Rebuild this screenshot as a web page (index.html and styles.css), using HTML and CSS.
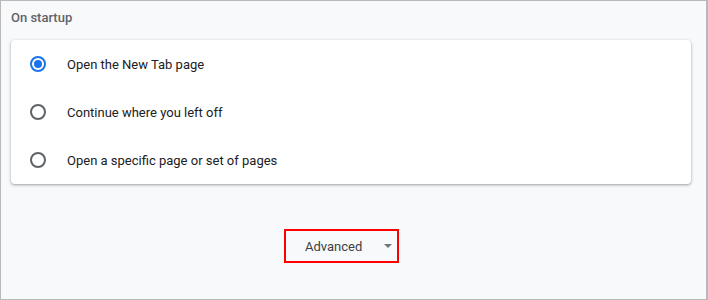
FILE: index.html
```html
<!DOCTYPE html>
<html lang="en">
<head>
  <meta charset="UTF-8" />
  <title>On startup</title>
  <link rel="stylesheet" href="styles.css">
</head>
<body>
  <div class="settings-page">
    <h2 class="section-title">On startup</h2>
    <div class="card">
      <label class="option">
        <span class="radio checked"></span>
        <span class="option-label">Open the New Tab page</span>
      </label>
      <label class="option">
        <span class="radio"></span>
        <span class="option-label">Continue where you left off</span>
      </label>
      <label class="option">
        <span class="radio"></span>
        <span class="option-label">Open a specific page or set of pages</span>
      </label>
    </div>
    <button class="advanced-btn">
      <span>Advanced</span>
      <span class="arrow"></span>
    </button>
  </div>
</body>
</html>
```

FILE: styles.css
```css
html, body {
  margin: 0;
  padding: 0;
}
body {
  font-family: Roboto, 'Liberation Sans', sans-serif;
  background: #f8f9fa;
}
.settings-page {
  width: 708px;
  height: 300px;
  box-sizing: border-box;
  border: 1px solid #b9b9b9;
  border-right-width: 2px;
  padding: 7px 15px 0 10px;
  background: #f8f9fa;
}
.section-title {
  margin: 0 0 12px 0;
  font-size: 13px;
  font-weight: 500;
  line-height: 20px;
  color: #5f6368;
}
.card {
  background: #fff;
  border-radius: 4px;
  box-shadow: 0 1px 2px rgba(60,64,67,0.3), 0 1px 3px 1px rgba(60,64,67,0.15);
}
.option {
  display: flex;
  align-items: center;
  height: 48px;
  padding-left: 19px;
  cursor: pointer;
}
.radio {
  width: 16px;
  height: 16px;
  box-sizing: border-box;
  border: 2px solid #5f6368;
  border-radius: 50%;
  display: flex;
  align-items: center;
  justify-content: center;
  margin-right: 21px;
}
.radio.checked {
  border-color: #1a73e8;
}
.radio.checked::after {
  content: "";
  width: 8px;
  height: 8px;
  border-radius: 50%;
  background: #1a73e8;
}
.option-label {
  font-size: 13px;
  color: #202124;
}
.advanced-btn {
  display: flex;
  align-items: center;
  margin: 45px 0 0 273px;
  width: 115px;
  height: 34px;
  box-sizing: border-box;
  padding: 0 0 0 19px;
  border: 2px solid #ff0000;
  background: transparent;
  font-family: inherit;
  font-size: 13px;
  color: #3c4043;
  cursor: pointer;
}
.arrow {
  margin-left: 22px;
  width: 0;
  height: 0;
  border-left: 4px solid transparent;
  border-right: 4px solid transparent;
  border-top: 4px solid #757575;
}
```
